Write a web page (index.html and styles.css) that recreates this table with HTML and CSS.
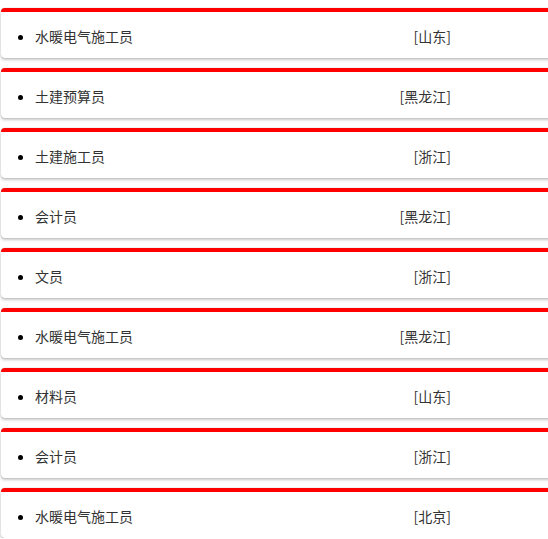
FILE: index.html
```html
<!DOCTYPE html>
<html lang="zh">
<head>
<meta charset="utf-8">
<link rel="stylesheet" href="styles.css">
</head>
<body>
<div class="list">
  <div class="card"><ul class="row"><li class="item"><span class="loc">[山东]</span><span class="title">水暖电气施工员</span></li></ul></div>
  <div class="card"><ul class="row"><li class="item"><span class="loc">[黑龙江]</span><span class="title">土建预算员</span></li></ul></div>
  <div class="card"><ul class="row"><li class="item"><span class="loc">[浙江]</span><span class="title">土建施工员</span></li></ul></div>
  <div class="card"><ul class="row"><li class="item"><span class="loc">[黑龙江]</span><span class="title">会计员</span></li></ul></div>
  <div class="card"><ul class="row"><li class="item"><span class="loc">[浙江]</span><span class="title">文员</span></li></ul></div>
  <div class="card"><ul class="row"><li class="item"><span class="loc">[黑龙江]</span><span class="title">水暖电气施工员</span></li></ul></div>
  <div class="card"><ul class="row"><li class="item"><span class="loc">[山东]</span><span class="title">材料员</span></li></ul></div>
  <div class="card"><ul class="row"><li class="item"><span class="loc">[浙江]</span><span class="title">会计员</span></li></ul></div>
  <div class="card"><ul class="row"><li class="item"><span class="loc">[北京]</span><span class="title">水暖电气施工员</span></li></ul></div>
</div>
</body>
</html>
```

FILE: styles.css
```css
html, body {
  margin: 0;
  padding: 0;
  background: #fff;
}
body {
  font-family: "Noto Sans CJK SC", "Noto Sans", sans-serif;
  font-size: 14px;
  color: #333;
}
.list {
  display: flex;
  flex-direction: column;
  gap: 10px;
  padding: 8px 0 0 1px;
  margin-right: -20px;
}
.card {
  background: #fff;
  border-top: 4px solid #ff0000;
  border-radius: 4px;
  box-shadow: 0 0 1px rgba(0, 0, 0, 0.35), 0 2px 3px rgba(0, 0, 0, 0.22);
  height: 46px;
}
.row {
  margin: 0;
  padding: 14px 0 0 34px;
  list-style: disc;
}
.item {
  width: 416px;
  line-height: 20px;
}
.item::marker {
  color: #000;
}
.loc {
  float: right;
  color: #333;
}
```
